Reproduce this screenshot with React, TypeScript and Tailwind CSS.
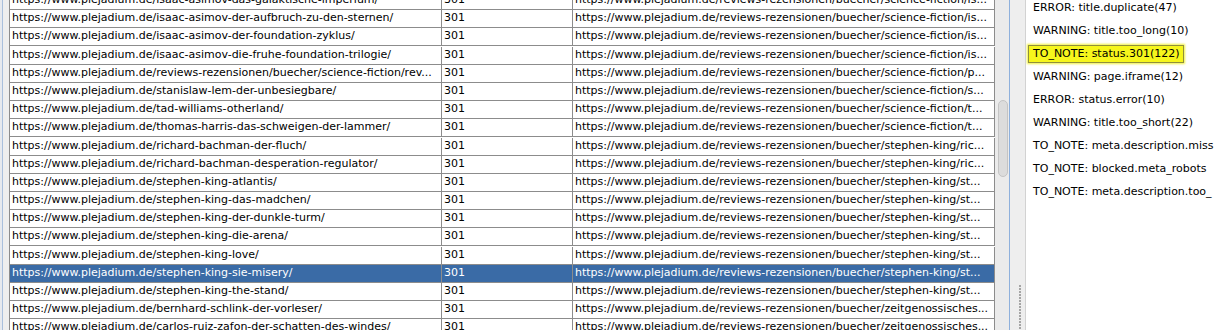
import React from "react";

const P = "https://www.plejadium.de/";
const R = "https://www.plejadium.de/reviews-rezensionen/buecher/";

const rows: [string, string][] = [
  [P + "isaac-asimov-das-galaktische-imperium/", R + "science-fiction/is..."],
  [P + "isaac-asimov-der-aufbruch-zu-den-sternen/", R + "science-fiction/is..."],
  [P + "isaac-asimov-der-foundation-zyklus/", R + "science-fiction/is..."],
  [P + "isaac-asimov-die-fruhe-foundation-trilogie/", R + "science-fiction/is..."],
  [P + "reviews-rezensionen/buecher/science-fiction/rev...", R + "science-fiction/p..."],
  [P + "stanislaw-lem-der-unbesiegbare/", R + "science-fiction/s..."],
  [P + "tad-williams-otherland/", R + "science-fiction/t..."],
  [P + "thomas-harris-das-schweigen-der-lammer/", R + "science-fiction/t..."],
  [P + "richard-bachman-der-fluch/", R + "stephen-king/ric..."],
  [P + "richard-bachman-desperation-regulator/", R + "stephen-king/ric..."],
  [P + "stephen-king-atlantis/", R + "stephen-king/st..."],
  [P + "stephen-king-das-madchen/", R + "stephen-king/st..."],
  [P + "stephen-king-der-dunkle-turm/", R + "stephen-king/st..."],
  [P + "stephen-king-die-arena/", R + "stephen-king/st..."],
  [P + "stephen-king-love/", R + "stephen-king/st..."],
  [P + "stephen-king-sie-misery/", R + "stephen-king/st..."],
  [P + "stephen-king-the-stand/", R + "stephen-king/st..."],
  [P + "bernhard-schlink-der-vorleser/", R + "zeitgenossisches..."],
  [P + "carlos-ruiz-zafon-der-schatten-des-windes/", R + "zeitgenossisches..."],
];

// rows that are one pixel taller (the reference pitch is a little over 18px)
const tall = new Set([3, 8, 14]);

const items = [
  "ERROR: title.duplicate(47)",
  "WARNING: title.too_long(10)",
  "TO_NOTE: status.301(122)",
  "WARNING: page.iframe(12)",
  "ERROR: status.error(10)",
  "WARNING: title.too_short(22)",
  "TO_NOTE: meta.description.miss",
  "TO_NOTE: blocked.meta_robots",
  "TO_NOTE: meta.description.too_",
];

export default function App() {
  return (
    <div className="flex h-[330px] w-[1214px] overflow-hidden bg-white font-['DejaVu_Sans',sans-serif] text-[11px] text-black">
      {/* left edge strip */}
      <div className="flex h-full w-[9px] shrink-0">
        <div className="h-full w-[2px] bg-[#e6e9ee]" />
        <div className="h-full w-[1px] bg-[#a9bfdc]" />
        <div className="h-full w-[6px] bg-[#eeeeee]" />
      </div>

      {/* table */}
      <div className="h-full w-[986px] shrink-0 overflow-hidden border-l border-[#8c8c8c]">
        <div className="-mt-[8px] flex flex-col">
          {rows.map(([a, c], i) => {
            const sel = i === 15;
            return (
              <div
                key={i}
                className={`flex shrink-0 border-b border-[#8c8c8c] ${tall.has(i) ? "h-[19px] pt-[1px]" : "h-[18px]"} ${
                  sel ? "bg-[#3a6ba6] text-white" : ""
                }`}
              >
                <div className="h-full w-[432px] shrink-0 overflow-hidden whitespace-nowrap border-r border-[#8c8c8c] pl-[2px] leading-[15px]">
                  {a}
                </div>
                <div className="h-full w-[131px] shrink-0 overflow-hidden whitespace-nowrap border-r border-[#8c8c8c] pl-[2px] leading-[15px]">
                  301
                </div>
                <div className="h-full w-[422px] shrink-0 overflow-hidden whitespace-nowrap border-r border-[#8c8c8c] pl-[2px] leading-[15px]">
                  {c}
                </div>
              </div>
            );
          })}
        </div>
      </div>

      {/* scrollbar */}
      <div className="relative h-full w-[14px] shrink-0 bg-[#ebebeb]">
        <div className="absolute left-[3px] top-[100px] h-[77px] w-[10px] rounded-[5px] border border-[#c4c4c4] bg-[#dcdcdc]" />
      </div>
      <div className="h-full w-[1px] shrink-0 bg-[#8eb0dc]" />

      {/* splitter */}
      <div className="flex h-full w-[15px] shrink-0 flex-col bg-[#eeeeee]">
        <div className="h-[285px] shrink-0" />
        <div className="ml-[9px] flex flex-col gap-[1px]">
          {Array.from({ length: 15 }).map((_, i) => (
            <div key={i} className="h-[2px] w-[2px] bg-[#a5a5a5]" />
          ))}
        </div>
      </div>
      <div className="h-full w-[1px] shrink-0 bg-[#d2d2d2]" />

      {/* right list */}
      <div className="h-full flex-1 overflow-hidden bg-white">
        <div className="-mt-[4px] flex flex-col">
          {items.map((t, i) => {
            const sel = i === 2;
            return (
              <div key={i} className="flex h-[23px] shrink-0 items-center whitespace-nowrap">
                <span
                  className={`ml-[2px] inline-block h-[18px] border pl-[4px] pr-[3px] leading-[16px] ${
                    sel
                      ? "border-[#8f8f3c] bg-[#f6f61c] shadow-[0_0_2px_1px_#f0f040]"
                      : "border-transparent"
                  }`}
                >
                  {t}
                </span>
              </div>
            );
          })}
        </div>
      </div>
    </div>
  );
}
